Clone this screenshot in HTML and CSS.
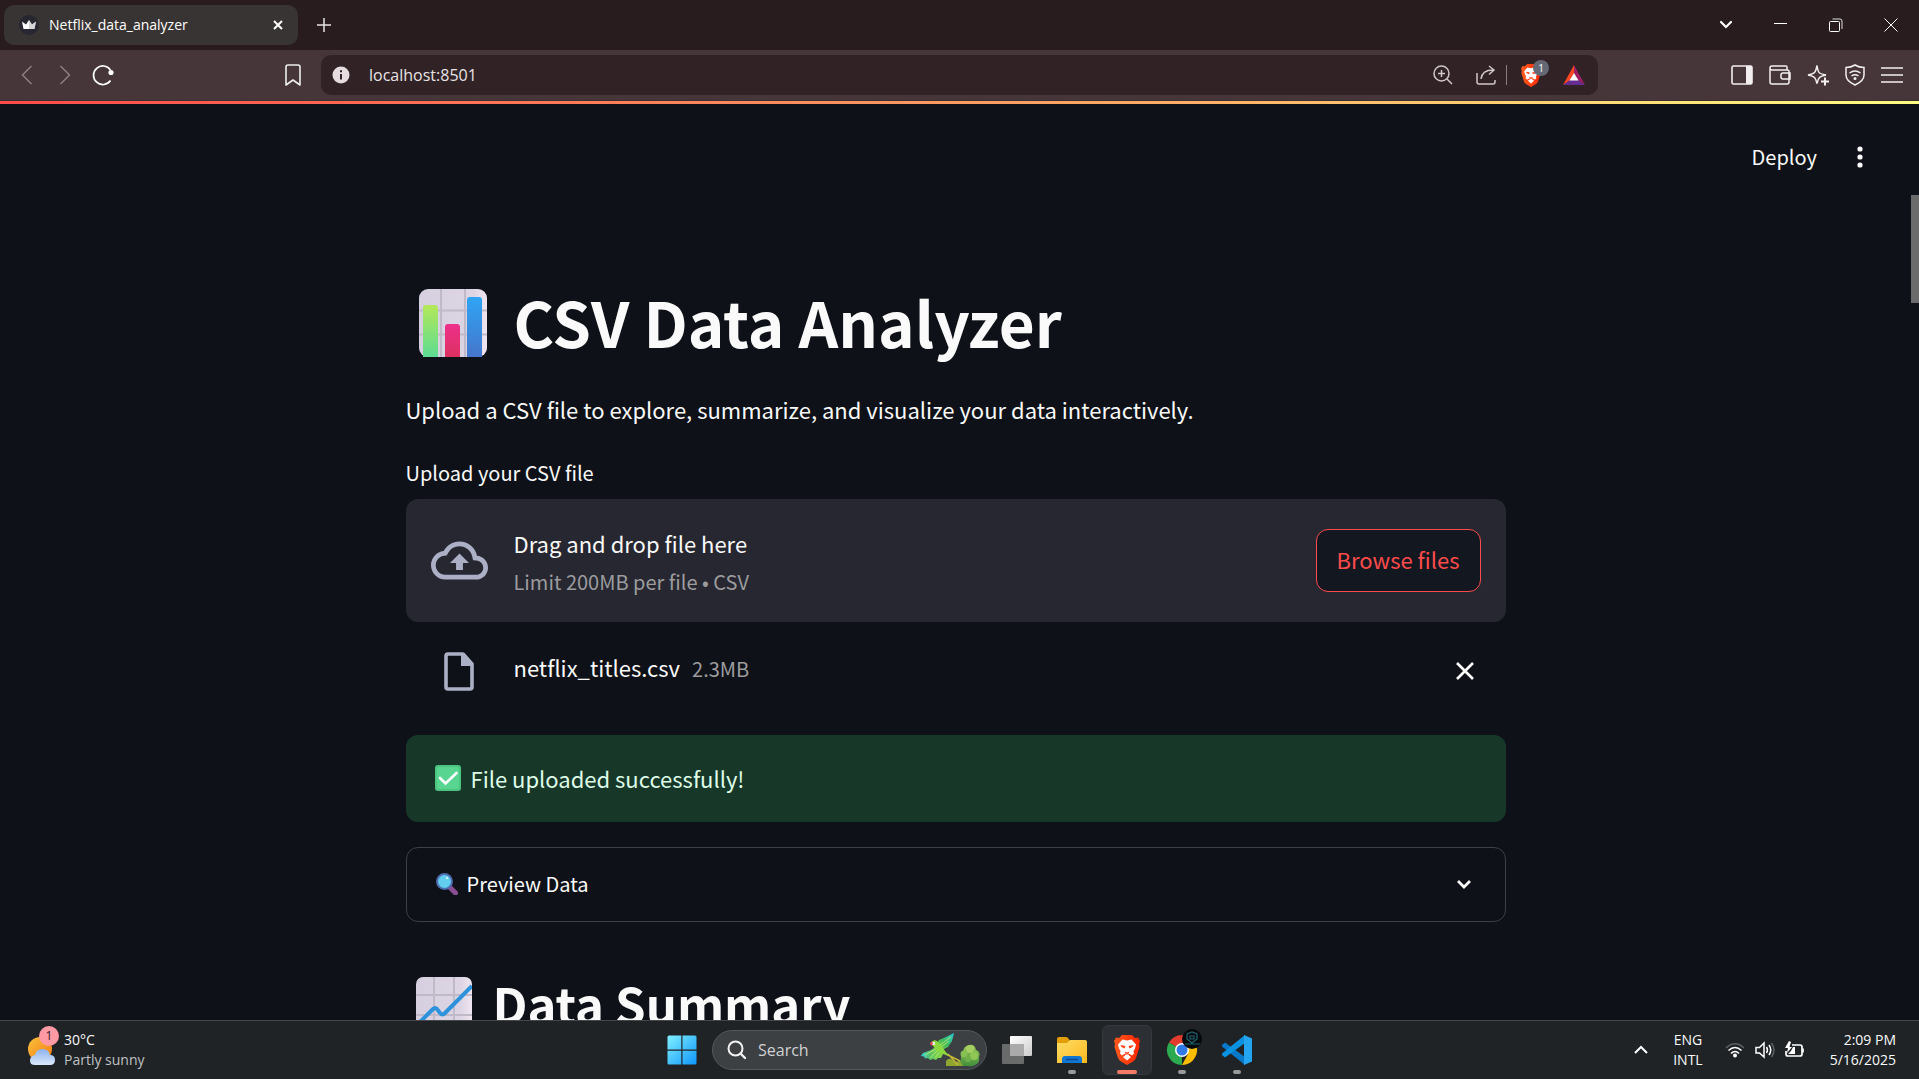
FILE: index.html
```html
<!DOCTYPE html>
<html lang="en">
<head>
<meta charset="utf-8">
<title>Netflix_data_analyzer</title>
<link rel="stylesheet" href="styles.css">
</head>
<body>
<svg class="defs" aria-hidden="true">
  <defs>
    <linearGradient id="lionRed" x1="0" x2="1"><stop offset="0" stop-color="#ff5a1f"/><stop offset="1" stop-color="#ff2500"/></linearGradient>
    <symbol id="lion" viewBox="0 0 26 30">
      <path fill="url(#lionRed)" d="M8 0h10l3 3 3-.5 2 3.500-1 3 .5 3L22 23q-1 2-3 3.500L13 30l-6-3.500Q5 25 4 23L.5 12 1 9 0 6l2-3.500L5 3z"/>
      <path fill="#fff" d="M8.500 4.500L13 5.500l4.500-1 4.500 5-1 4-1.500 2.500.5 2.500-2 2-3-1.500v1.500l2 1.500-4 3.500-4-3.500 2-1.500V19l-3 1.500-2-2 .5-2.500L5 13.500l-1-4z"/>
      <path fill="#ff4013" d="M6.500 10l5 1-1 2.500L7.500 12zM19.500 10l-5 1 1 2.500 3-1.500zM10.500 16.500l2.500 1 2.500-1-1 2.200h-3z"/>
      <path fill="none" stroke="#ff4013" d="M8.500 20.500l4.500-1.800 4.500 1.800"/>
    </symbol>
    <linearGradient id="paper" x1="0" x2="1"><stop offset="0" stop-color="#d5cfdf"/><stop offset=".8" stop-color="#ddd5e4"/><stop offset="1" stop-color="#f0e6f1"/></linearGradient>
    <linearGradient id="greenBar" x1="0" y1="0" x2="0" y2="1"><stop offset="0" stop-color="#b4e858"/><stop offset="1" stop-color="#5cdc93"/></linearGradient>
    <linearGradient id="pinkBar" x1="0" y1="0" x2="0" y2="1"><stop offset="0" stop-color="#ee2f8c"/><stop offset="1" stop-color="#dc3160"/></linearGradient>
    <linearGradient id="blueBar" x1="0" y1="0" x2="0" y2="1"><stop offset="0" stop-color="#2fa5f5"/><stop offset="1" stop-color="#4576cc"/></linearGradient>
    <linearGradient id="winBlue" x1="0" y1="0" x2="1" y2="1"><stop offset="0" stop-color="#80f0ff"/><stop offset="1" stop-color="#0f96fa"/></linearGradient>
    <linearGradient id="sun" x1="0" y1="0" x2="1" y2="1"><stop offset="0" stop-color="#f8c23c"/><stop offset="1" stop-color="#f57a12"/></linearGradient>
    <linearGradient id="cloud" x1="0" y1="0" x2="0" y2="1"><stop offset="0" stop-color="#8db3ee"/><stop offset="1" stop-color="#dbe8fb"/></linearGradient>
    <linearGradient id="folder" x1="0" y1="0" x2="1" y2="1"><stop offset="0" stop-color="#ffdc66"/><stop offset="1" stop-color="#fbb91e"/></linearGradient>
    <linearGradient id="wingLeft" x1="0" x2="1"><stop offset="0" stop-color="#35d3dc"/><stop offset=".4" stop-color="#58c26a"/><stop offset="1" stop-color="#8fd83f"/></linearGradient>
    <linearGradient id="wingRight" x1="0" y1="1" x2="1" y2="0"><stop offset="0" stop-color="#8fd83f"/><stop offset=".5" stop-color="#3fb95c"/><stop offset="1" stop-color="#25d0e0"/></linearGradient>
    <linearGradient id="bush" x1="0" y1="0" x2="0" y2="1"><stop offset="0" stop-color="#9fcb57"/><stop offset="1" stop-color="#3f8e3c"/></linearGradient>
    <linearGradient id="taskTop" x1="0" y1="0" x2="1" y2="1"><stop offset="0" stop-color="#fff"/><stop offset="1" stop-color="#ccc"/></linearGradient>
  </defs>
</svg>

<header class="browser">
  <div class="tabstrip">
    <div class="tab">
      <svg class="favicon" width="20" height="20" viewBox="0 0 20 20"><circle cx="10" cy="10" r="10" fill="#262730"/><path fill="#fff" d="M3 6.500l4 3 3-4.500 3 4.500 4-3L15.500 14h-11z"/><path fill="#b9b9bd" d="M10 5l3 4.500 4-3L15.500 14H10z" opacity=".6"/></svg>
      <span class="tab-title">Netflix_data_analyzer</span>
      <button class="icon-btn" aria-label="Close tab"><svg width="10" height="10" viewBox="0 0 10 10"><path d="M1 1l8 8M9 1L1 9" stroke="#fff" stroke-width="2"/></svg></button>
    </div>
    <button class="icon-btn new-tab" aria-label="New tab"><svg width="14" height="14" viewBox="0 0 14 14"><path d="M7 0v14M0 7h14" stroke="#e8e3e4" stroke-width="1.500"/></svg></button>
    <div class="window-controls">
      <button class="icon-btn" aria-label="Search tabs"><svg width="14" height="10" viewBox="0 0 14 10"><path d="M2 2l5 5 5-5" fill="none" stroke="#fff" stroke-width="2.200" stroke-linecap="round"/></svg></button>
      <button class="icon-btn" aria-label="Minimize"><svg width="14" height="14" viewBox="0 0 14 14"><path d="M0 5.500h13" stroke="#fff"/></svg></button>
      <button class="icon-btn" aria-label="Restore"><svg width="14" height="14" viewBox="0 0 14 14"><path d="M3.500 1h7.500q2 0 2 2v8" fill="none" stroke="#ddd"/><rect x=".5" y="3.500" width="10" height="10" rx="1" fill="none" stroke="#fff"/></svg></button>
      <button class="icon-btn" aria-label="Close window"><svg width="14" height="14" viewBox="0 0 14 14"><path d="M.5.5l13 13M13.500.5l-13 13" stroke="#fff"/></svg></button>
    </div>
  </div>
  <div class="toolbar">
    <button class="icon-btn nav-btn" aria-label="Back"><svg width="12" height="20" viewBox="0 0 12 20"><path d="M10.500 1L1.500 10l9 9" fill="none" stroke="#8b7f81" stroke-width="1.500"/></svg></button>
    <button class="icon-btn nav-btn" aria-label="Forward"><svg width="12" height="20" viewBox="0 0 12 20"><path d="M1.500 1l9 9-9 9" fill="none" stroke="#8b7f81" stroke-width="1.500"/></svg></button>
    <button class="icon-btn nav-btn" aria-label="Reload"><svg width="22" height="22" viewBox="0 0 22 22"><path d="M18.500 16.500A9.300 9.300 0 1 1 18.500 6" fill="none" stroke="#fff" stroke-width="1.700"/><circle cx="19" cy="8.500" r="2.600" fill="#fff"/></svg></button>
    <button class="icon-btn bookmark" aria-label="Bookmark"><svg width="16" height="22" viewBox="0 0 16 22"><path d="M1 3q0-2 2-2h10q2 0 2 2v18l-7-5-7 5z" fill="none" stroke="#eee" stroke-width="1.600" stroke-linejoin="round"/></svg></button>
    <div class="address">
      <svg width="18" height="18" viewBox="0 0 18 18"><circle cx="9" cy="9" r="8.500" fill="#e5dddf"/><path d="M9 8v5.500M9 4.300v2" stroke="#302225" stroke-width="2"/></svg>
      <input class="url" type="text" value="localhost:8501" aria-label="Address">
      <button class="icon-btn" aria-label="Zoom"><svg width="20" height="20" viewBox="0 0 20 20"><circle cx="8.500" cy="8.500" r="7.500" fill="none" stroke="#cfc6c8" stroke-width="1.500"/><path d="M8.500 5v7M5 8.500h7M14 14l5 5" stroke="#cfc6c8" stroke-width="1.500"/></svg></button>
      <button class="icon-btn share" aria-label="Share"><svg width="20" height="20" viewBox="0 0 20 20"><path d="M1 8v9q0 2 2 2h14q2 0 2-2v-2M5 14Q6 5 17 5M13 1l5 4-5 4.500" fill="none" stroke="#cfc6c8" stroke-width="1.500"/></svg></button>
      <button class="icon-btn shields" aria-label="Shields"><svg width="20" height="23"><use href="#lion"/></svg><span class="shield-count">1</span></button>
      <button class="icon-btn rewards" aria-label="Rewards"><svg width="22" height="20" viewBox="0 0 22 20"><path fill="#ff4724" d="M11 0L0 20l7.500-5L11 8z"/><path fill="#9e1f63" d="M11 0l11 20-7.500-5L11 8z"/><path fill="#662d91" d="M0 20l7-5h8l7 5z"/><path fill="#fff" d="M11 8l4.500 7.500h-9z"/></svg></button>
    </div>
    <div class="tools">
      <button class="icon-btn" aria-label="Sidebar"><svg width="22" height="20" viewBox="0 0 22 20"><rect x="1" y="1" width="20" height="18" rx="1.500" fill="none" stroke="#f3eff0" stroke-width="1.600"/><path d="M15 1h6v18h-6z" fill="#f3eff0"/></svg></button>
      <button class="icon-btn" aria-label="Wallet"><svg width="22" height="20" viewBox="0 0 22 20"><path d="M1 4v13q0 2 2 2h15q2 0 2-2V6q0-1-2-1H3Q1 5 1 3t2-2h14q1 0 1 1v3M21 8h-7q-2 0-2 2v2q0 2 2 2h7z" fill="none" stroke="#f3eff0" stroke-width="1.500"/></svg></button>
      <button class="icon-btn" aria-label="Leo"><svg width="22" height="22" viewBox="0 0 22 22"><path d="M10 1.500Q11 8 12.500 9T19 11q-5 1-6.500 2.500T10 19.500Q9 15 7.500 13.500T1 11q5-1 6.500-2.500T10 1.500z" fill="none" stroke="#f3eff0" stroke-width="1.500"/><path d="M18 13.500v8M14 17.500h8" stroke="#f3eff0" stroke-width="2"/></svg></button>
      <button class="icon-btn" aria-label="VPN"><svg width="20" height="22" viewBox="0 0 20 22"><path d="M10 1q4 2.500 9 2.500V11q0 6-9 10Q1 17 1 11V3.500Q6 3.500 10 1z" fill="none" stroke="#f3eff0" stroke-width="1.500"/><path d="M4.500 9q5.500-4 11 0M6.500 12q3.500-2.500 7 0" fill="none" stroke="#f3eff0" stroke-width="1.500"/><circle cx="10" cy="14.500" r="1.500" fill="#f3eff0"/></svg></button>
      <button class="icon-btn" aria-label="Menu"><svg width="22" height="16" viewBox="0 0 22 16"><path d="M0 1h22M0 8h22M0 15h22" stroke="#f3eff0" stroke-width="1.600"/></svg></button>
    </div>
  </div>
</header>

<div class="viewport">
  <div class="decoration"></div>
  <div class="scroll-thumb"></div>
  <div class="app-header">
    <button class="deploy">Deploy</button>
    <button class="icon-btn" aria-label="Main menu"><svg width="6" height="22" viewBox="0 0 6 22"><circle cx="3" cy="3" r="2.600" fill="#fafafa"/><circle cx="3" cy="11" r="2.600" fill="#fafafa"/><circle cx="3" cy="19" r="2.600" fill="#fafafa"/></svg></button>
  </div>
  <main class="content">
    <h1 class="title">
      <svg width="68" height="68" viewBox="0 0 68 68"><rect width="68" height="68" rx="9" fill="url(#paper)"/><path d="M22 0v68M46 0v68M0 21.500h68M0 45.500h68" stroke="#bfb9c8" stroke-width="2"/><path fill="url(#greenBar)" d="M4 68V19q0-3 3-3h9q3 0 3 3v49z"/><path fill="url(#pinkBar)" d="M26 68V38q0-3 3-3h9q3 0 3 3v30z"/><path fill="url(#blueBar)" d="M48 68V11q0-3 3-3h9q3 0 3 3v57z"/></svg>
      <span>CSV Data Analyzer</span>
    </h1>
    <p class="intro">Upload a CSV file to explore, summarize, and visualize your data interactively.</p>
    <label class="upload-label" for="browse">Upload your CSV file</label>
    <section class="dropzone">
      <svg width="57" height="57" viewBox="0 0 24 24"><path fill="#acb0c6" d="M19.350 10.040A7.490 7.490 0 0 0 12 4C9.110 4 6.600 5.640 5.350 8.040A5.994 5.994 0 0 0 0 14c0 3.310 2.690 6 6 6h13c2.760 0 5-2.240 5-5 0-2.640-2.050-4.780-4.650-4.960zM19 18H6c-2.210 0-4-1.790-4-4 0-2.050 1.530-3.760 3.560-3.970l1.070-.11.5-.95A5.469 5.469 0 0 1 12 6c2.620 0 4.880 1.860 5.390 4.430l.3 1.500 1.530.11A2.980 2.980 0 0 1 22 15c0 1.650-1.350 3-3 3zM8 13h2.550v3h2.900v-3H16l-4-4z"/></svg>
      <div class="drop-text">
        <span class="drop-main">Drag and drop file here</span>
        <small class="muted">Limit 200MB per file • CSV</small>
      </div>
      <button class="browse" id="browse">Browse files</button>
    </section>
    <div class="file-row">
      <svg width="57" height="46" viewBox="0 0 57 46"><path fill="none" stroke="#acb0c6" stroke-width="3.600" stroke-linejoin="round" d="M17 6h15l9 10v23q0 2-2 2H17q-2 0-2-2V8q0-2 2-2z"/><path fill="#acb0c6" d="M30 5h3l9 10v3H30z"/></svg>
      <div class="file-name"><span>netflix_titles.csv</span><small class="muted">2.3MB</small></div>
      <button class="icon-btn" aria-label="Remove file"><svg width="20" height="20" viewBox="0 0 20 20"><path d="M2 2l16 16M18 2L2 18" stroke="#fff" stroke-width="2.600"/></svg></button>
    </div>
    <div class="alert" role="alert">
      <svg width="26" height="26" viewBox="0 0 26 26"><rect width="26" height="26" rx="3" fill="#4cc581"/><rect x="2" y="2" width="22" height="22" rx="2" fill="#58d691"/><path d="M5 13l5.500 5.500L21.500 8" fill="none" stroke="#fff" stroke-width="2.600" stroke-linecap="round"/></svg>
      <span>File uploaded successfully!</span>
    </div>
    <details class="expander">
      <summary>
        <svg width="22" height="22" viewBox="0 0 22 22"><path d="M13.500 14l6 6" stroke="#8a4f93" stroke-width="5" stroke-linecap="round"/><circle cx="8.500" cy="8.500" r="7.500" fill="#62cdee" stroke="#4e6cb0" stroke-width="2"/><circle cx="11" cy="5" r="1.200" fill="#c6f0fb"/></svg>
        <span>Preview Data</span>
        <svg class="chevron" width="16" height="10" viewBox="0 0 16 10"><path d="M2 2l6 6 6-6" fill="none" stroke="#fafafa" stroke-width="2.800"/></svg>
      </summary>
    </details>
    <h2 class="subtitle">
      <svg width="56" height="56" viewBox="0 0 56 56"><rect width="56" height="56" rx="7" fill="url(#paper)"/><path d="M18 0v56M38 0v56M0 18h56M0 38h56" stroke="#bfb9c8" stroke-width="2"/><path d="M3 46l14-14q2-2 4 0l3 4q2 3 5 0L56 9" fill="none" stroke="#2c92dc" stroke-width="4"/></svg>
      <span>Data Summary</span>
    </h2>
  </main>
</div>

<footer class="taskbar">
  <div class="weather">
    <div class="weather-icon">
      <svg width="30" height="30" viewBox="0 0 30 30"><circle cx="12" cy="12" r="12" fill="url(#sun)"/><path fill="url(#cloud)" d="M7 28q-5 0-5-4.500T7 18q1-6 7.500-6T22 18q5 0 5 5t-5 5z"/></svg>
      <span class="weather-badge">1</span>
    </div>
    <div class="weather-text"><span>30°C</span><span class="dim">Partly sunny</span></div>
  </div>
  <nav class="pinned">
    <button class="app" aria-label="Start"><svg width="30" height="30" viewBox="0 0 30 30"><path fill="url(#winBlue)" d="M2 .5h12.300v14H.5V2Q.5.5 2 .5zM15.500.5H28q1.500 0 1.500 1.500v12.500h-14zM.5 15.700h13.800v13.800H2q-1.500 0-1.500-1.500zM15.500 15.700h14V28q0 1.500-1.500 1.500H15.500z"/></svg></button>
    <label class="search">
      <svg width="20" height="20" viewBox="0 0 20 20"><circle cx="8.500" cy="8.500" r="7" fill="none" stroke="#f2f2f2" stroke-width="2"/><path d="M13.500 13.500L18 18" stroke="#f2f2f2" stroke-width="2.400" stroke-linecap="round"/></svg>
      <input type="search" placeholder="Search" aria-label="Search">
      <svg width="60" height="34" viewBox="0 0 60 34"><path fill="url(#bush)" d="M35 33q2-5 6-6-1-5 2-7 0-7 6-8 6-1 7 5 5 2 3 7 1 6-4 8-3 2-7 1z"/><circle cx="50" cy="16" r="4" fill="#a5cf62"/><circle cx="44" cy="21" r="3.500" fill="#86bf52"/><circle cx="54" cy="23" r="4" fill="#8fc655"/><circle cx="48" cy="26" r="3" fill="#6fb04a"/><path fill="#8fa631" d="M26 33v-5q2-3 5-2l4 3 5-1 3 5z"/><path d="M28 21l10 11M26 21l14 7" stroke="#c5b637" stroke-width="1.500"/><path fill="url(#wingLeft)" d="M17 13l-6 4-8 3-2 3 3 .5 1 2 3-.5 2 2 3-1 3 1 2-2 3 0 2-4z"/><path fill="url(#wingRight)" d="M16 12l3-5 7-3 8-4-1 4-1 4-2 3-2 3-4 2-3 3z"/><path d="M16 16L5 22M18 17l-8 8M20 18l-5 7M20 12l11-8M21 14l8-6" stroke="#c9ee6b" stroke-width=".8"/><path fill="#8cd93f" d="M11 10q2-4 6-2l4 4 4 6 4 5-6-2-7-4-3-4z"/><path fill="#efe8e8" d="M11 9h4v3h-3z"/><path fill="#e0475a" d="M10.500 9l2.500.5-1 3.500-2-2z"/></svg>
    </label>
    <button class="app" aria-label="Task view"><svg width="30" height="28" viewBox="0 0 30 28"><rect x="8" width="22" height="20" rx="1" fill="url(#taskTop)"/><rect y="8" width="22" height="20" rx="1" fill="#777" opacity=".85"/><path d="M8 8h14v12H8z" fill="#aaa"/></svg></button>
    <button class="app running" aria-label="File Explorer"><svg width="30" height="28" viewBox="0 0 30 28"><path fill="#e29d08" d="M0 3q0-2 2-2h7q2 0 4 4h15v6H0z"/><path fill="url(#folder)" d="M0 7h10l3-3h15q2 0 2 2v21H0z"/><path fill="#1076d0" d="M5 27v-4q0-3 3-3h14q3 0 3 3v4z"/><path d="M9 23.500h12" stroke="#0a4a91" stroke-width="1.500"/></svg></button>
    <button class="app running active" aria-label="Brave"><svg width="26" height="30"><use href="#lion"/></svg></button>
    <button class="app running" aria-label="Chrome"><svg width="40" height="42" viewBox="0 0 40 42"><path fill="#e33b2e" d="M20 21L7 13.500A15 15 0 0 1 33 13.500z"/><path fill="#2da94f" d="M20 21v15A15 15 0 0 1 7 13.500z"/><path fill="#fdbd00" d="M20 21l13-7.500A15 15 0 0 1 20 36l6-11z"/><path fill="#e33b2e" d="M20 14h13L26 14z"/><circle cx="20" cy="21" r="7" fill="#fff"/><circle cx="20" cy="21" r="5.500" fill="#3079e8"/><circle cx="30" cy="10" r="10" fill="#06090c"/><path d="M25 5l5-2 5 2v5l-5 4-5-4zM28 7h4v3h-4zM23 15h15" fill="none" stroke="#1c6370" stroke-width="1.200"/></svg></button>
    <button class="app running" aria-label="Visual Studio Code"><svg width="30" height="30" viewBox="0 0 30 30"><path fill="#0878c8" d="M0 10l3-2.500L23 22v8L0 11.500z"/><path fill="#0a92e2" d="M0 20l3 2.500L23 8V0L0 18.500z"/><path fill="#24a5f2" d="M22 0l8 3.500v23L22 30z"/></svg></button>
  </nav>
  <div class="tray">
    <button class="icon-btn" aria-label="Hidden icons"><svg width="14" height="10" viewBox="0 0 14 10"><path d="M1 8l6-6 6 6" fill="none" stroke="#fff" stroke-width="2"/></svg></button>
    <div class="lang"><span>ENG</span><span>INTL</span></div>
    <div class="status">
      <svg width="20" height="18" viewBox="0 0 20 18"><path d="M1 7q9-8.500 18 0" fill="none" stroke="#5c6063" stroke-width="1.500"/><path d="M3.500 9.500q6.500-6 13 0M6 12.500q4-4 8 0" fill="none" stroke="#fff" stroke-width="1.600"/><circle cx="10" cy="14.500" r="2" fill="#fff"/></svg>
      <svg width="20" height="18" viewBox="0 0 20 18"><path d="M1 6.500h3.500L9 2v14l-4.500-4H1zM11.500 6q2 3 0 6M14 4q3.500 5 0 10" fill="none" stroke="#fff" stroke-width="1.500"/><path d="M16.500 2q5 7 0 14" fill="none" stroke="#5c6063" stroke-width="1.500"/></svg>
      <svg width="20" height="18" viewBox="0 0 20 18"><path d="M7 4h8q2 0 2 2v7q0 2-2 2H3q-2 0-2-2v-3M18 7.500v4" fill="none" stroke="#fff" stroke-width="1.700"/><path fill="#fff" d="M4 0L0 7h3l-1 5 5-6H4.500L6 1zM8 6h2v7H3l3-3z"/></svg>
    </div>
    <div class="clock"><span>2:09 PM</span><span>5/16/2025</span></div>
  </div>
</footer>
</body>
</html>
```
FILE: styles.css
```css
* { box-sizing: border-box; }

body {
  margin: 0;
  height: 100vh;
  display: flex;
  flex-direction: column;
  overflow: hidden;
  background: #0e1117;
  color: #fafafa;
  font-family: "Noto Sans CJK JP", "Noto Sans", sans-serif;
}

svg { display: block; flex: none; }
button, input { font: inherit; color: inherit; }
.defs { position: absolute; width: 0; height: 0; }

.icon-btn {
  display: flex;
  align-items: center;
  justify-content: center;
  padding: 0;
  border: 0;
  background: none;
}

/* Browser frame */
.browser, .taskbar { font-family: "Open Sans", "Noto Sans", sans-serif; }

.tabstrip {
  display: flex;
  align-items: center;
  height: 50px;
  padding: 0 4px;
  background: #281c1e;
}
.tab {
  display: flex;
  align-items: center;
  gap: 10px;
  width: 294px;
  height: 40px;
  padding: 0 15px;
  border-radius: 10px;
  background: #383433;
}
.tab-title { flex: 1; font-size: 14px; line-height: 20px; color: #fff; }
.new-tab { margin-left: 19px; }
.window-controls { display: flex; gap: 41px; margin-left: auto; padding-right: 17px; }

.toolbar {
  display: flex;
  align-items: center;
  height: 51px;
  padding-right: 16px;
  background: #463639;
  border-bottom: 1px solid #3a3033;
}
.nav-btn { width: 38px; }
.nav-btn:first-child { margin-left: 8px; }
.bookmark { margin: 0 20px 0 163px; }
.address {
  display: flex;
  flex: 1;
  align-items: center;
  height: 40px;
  padding: 0 13px 0 11px;
  border-radius: 10px;
  background: #302225;
}
.url {
  flex: 1;
  min-width: 0;
  margin-left: 19px;
  padding: 0;
  border: 0;
  background: none;
  font-size: 16px;
  color: #e9e2e4;
}
.share { margin-left: 23px; }
.shields {
  position: relative;
  height: 20px;
  margin-left: 10px;
  padding-left: 14px;
  border-left: 1px solid #8b7f81;
}
.shield-count {
  position: absolute;
  top: -5px;
  right: -8px;
  width: 16px;
  height: 16px;
  border-radius: 8px;
  background: #656976;
  font-size: 10px;
  line-height: 16px;
  color: #fff;
}
.rewards { margin-left: 22px; }
.tools { display: flex; align-items: center; gap: 16px; margin-left: 133px; }

/* App page */
.viewport { position: relative; flex: 1; min-height: 0; overflow: hidden; }
.decoration { height: 3px; background: linear-gradient(90deg, #ff4b4b, #ffab65 60%, #fffd80); }
.scroll-thumb {
  position: absolute;
  top: 94px;
  right: 0;
  width: 8px;
  height: 108px;
  background: #6b6b6b;
}
.app-header, .content-gutter { padding-right: 56px; }
.app-header {
  display: flex;
  align-items: center;
  justify-content: flex-end;
  gap: 40px;
  height: 106px;
}
.deploy {
  padding: 0;
  border: 0;
  background: none;
  font-size: 20px;
  line-height: 28px;
}
.content {
  width: 1108px;
  max-width: 100%;
  margin: 0 auto;
  padding-right: 8px;
}
.title, .subtitle { display: flex; align-items: center; font-weight: 700; }
.title svg, .subtitle svg { margin-top: 3px; }
.title { gap: 27px; margin: 71px 0 30px; padding-left: 13px; font-size: 62px; line-height: 80px; }
.intro { margin: 0 0 32px; font-size: 22px; line-height: 36px; }
.upload-label { display: block; margin-bottom: 12px; font-size: 20px; line-height: 28px; }
.dropzone {
  display: flex;
  align-items: center;
  gap: 26px;
  height: 123px;
  padding: 0 25px;
  border-radius: 12px;
  background: #262730;
}
.drop-text { display: flex; flex: 1; flex-direction: column; gap: 6px; }
.drop-main { font-size: 22px; line-height: 36px; }
.muted { font-size: 20px; line-height: 30px; color: #9c9c9f; }
.browse {
  height: 63px;
  padding: 0 20px 4px;
  border: 1px solid #ff4b4b;
  border-radius: 12px;
  background: #131720;
  font-size: 22px;
  color: #ff4b4b;
}
.file-row {
  display: flex;
  align-items: center;
  gap: 26px;
  margin: 24px 0 39px;
  padding: 0 31px 0 25px;
  height: 50px;
}
.file-name { display: flex; flex: 1; align-items: baseline; gap: 12px; padding-bottom: 8px; font-size: 22px; line-height: 36px; }
.alert {
  display: flex;
  align-items: center;
  gap: 10px;
  margin-bottom: 25px;
  padding: 25px 29px 26px;
  border-radius: 12px;
  background: #173828;
  font-size: 22px;
  line-height: 36px;
  color: #dffde9;
}
.expander { border: 1px solid #3d4045; border-radius: 12px; }
.expander summary {
  display: flex;
  align-items: center;
  gap: 9px;
  height: 73px;
  padding: 0 33px 2px 29px;
  font-size: 20px;
  list-style: none;
}
.chevron { margin-left: auto; }
.subtitle { gap: 21px; margin: 49px 0 0; padding-left: 10px; font-size: 49px; line-height: 64px; }

/* Desktop taskbar */
.taskbar {
  display: grid;
  grid-template-columns: 1fr auto 1fr;
  align-items: center;
  height: 59px;
  border-top: 1px solid #46494c;
  background: #1f2326;
  font-size: 14px;
  line-height: 20px;
}
.weather { display: flex; align-items: center; gap: 6px; padding-left: 28px; }
.weather-icon { position: relative; padding-top: 4px; }
.weather-badge {
  position: absolute;
  top: -7px;
  left: 11px;
  width: 20px;
  height: 20px;
  border-radius: 10px;
  background: #ff99a4;
  color: #222;
  font-size: 12px;
  text-align: center;
}
.weather-text, .lang, .clock { display: flex; flex-direction: column; }
.dim { color: #bfc1c2; }
.pinned { display: flex; align-items: center; gap: 5px; }
.app {
  position: relative;
  display: flex;
  align-items: center;
  justify-content: center;
  width: 50px;
  height: 50px;
  padding: 0;
  border: 1px solid transparent;
  border-radius: 6px;
  background: none;
}
.active { border-color: #35393d; background: #2c3034; }
.running::after {
  content: "";
  position: absolute;
  bottom: 0;
  width: 8px;
  height: 4px;
  border-radius: 2px;
  background: #9a9a9a;
}
.active::after { width: 20px; background: #f47c66; }
.search {
  display: flex;
  align-items: center;
  width: 275px;
  height: 40px;
  padding: 0 6px 0 14px;
  border: 1px solid #53575a;
  border-radius: 20px;
  background: #3c4043;
}
.search input {
  flex: 1;
  min-width: 0;
  margin-left: 11px;
  padding: 0;
  border: 0;
  background: none;
  font-size: 16px;
}
.search input::placeholder { color: #d0d2d3; opacity: 1; }
.tray { display: flex; align-items: center; justify-content: flex-end; padding-right: 23px; }
.lang { margin: 0 22px 0 25px; text-align: center; }
.status { display: flex; gap: 10px; margin-right: 25px; }
.clock { text-align: right; }
```
